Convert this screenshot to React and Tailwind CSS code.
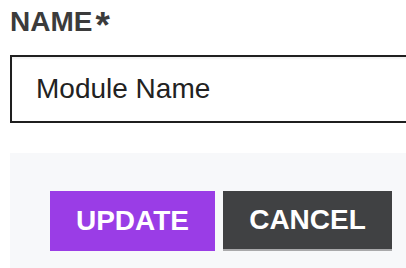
import React from 'react';

export default function App() {
  return (
    <div
      className="w-[406px] h-[268px] overflow-hidden bg-white pl-[10px] pt-[6px]"
      style={{ fontFamily: '"Liberation Sans", Arial, sans-serif' }}
    >
      {/* Label */}
      <div className="flex items-start h-[32px] text-[28px] leading-[32px] font-bold text-[#3b3b3b]">
        <span>NAME</span>
        <span className="ml-[3px] mt-[4px] text-[37px] leading-[32px]">*</span>
      </div>

      {/* Input */}
      <div className="mt-[17px] w-[430px] h-[68px] border-2 border-[#1f1f1f] shadow-[inset_0_2px_2px_rgba(0,0,0,0.06)] flex items-center pl-[24px] text-[28px] text-[#222]">
        Module Name
      </div>

      {/* Actions panel */}
      <div className="mt-[30px] w-[430px] h-[140px] bg-[#f7f8fa] pl-[40px] pt-[38px]">
        <div className="flex gap-[8px]">
          <button className="w-[165px] h-[60px] bg-[#9a3de6] text-white font-bold text-[28px] leading-none">
            UPDATE
          </button>
          <button className="w-[169px] h-[60px] bg-[#404143] border-b-2 border-[#a9a9ab] text-white font-bold text-[28px] leading-none">
            CANCEL
          </button>
        </div>
      </div>
    </div>
  );
}
